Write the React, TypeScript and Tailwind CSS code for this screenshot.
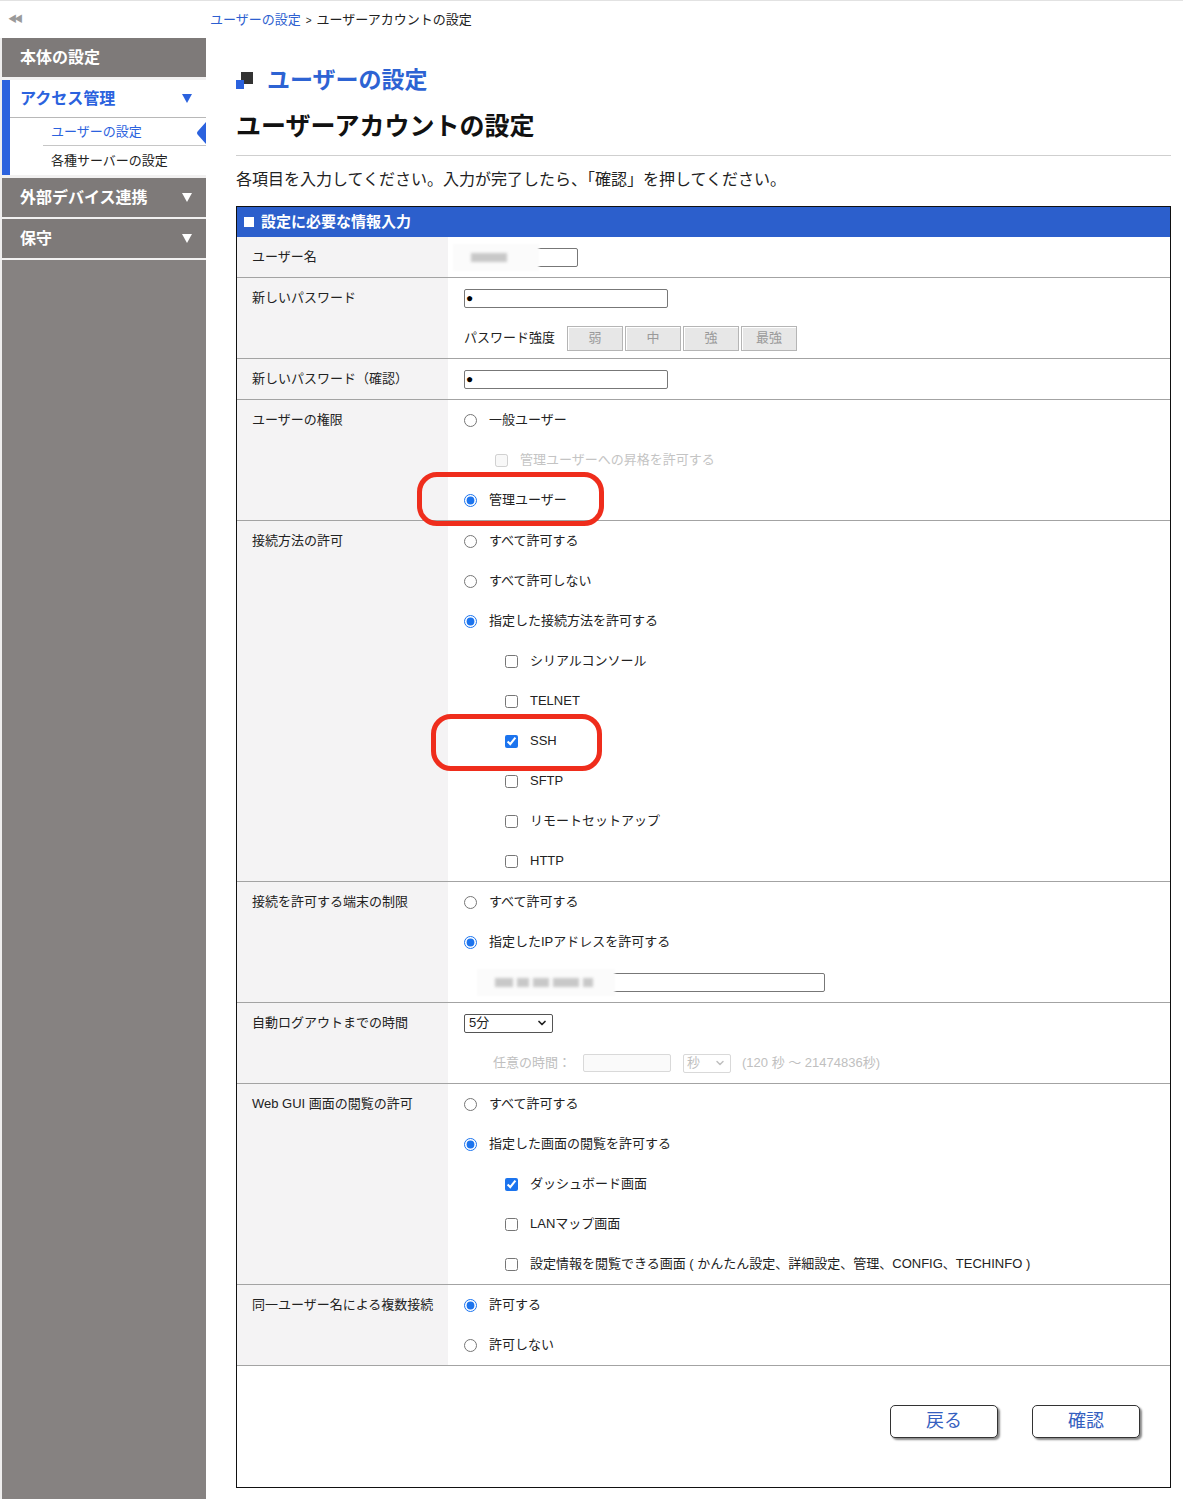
import { ChevronDown } from 'lucide-react';
import type { ReactNode } from 'react';

const blue = 'text-[#2d63d3]';

function Radio({ name, checked, label }: { name: string; checked?: boolean; label: string }) {
  return (
    <label className="flex items-center gap-3">
      <input type="radio" name={name} defaultChecked={checked} className="h-[13px] w-[13px] accent-[#1c74ee]" />
      <span>{label}</span>
    </label>
  );
}

function Check({ checked, label, disabled }: { checked?: boolean; label: string; disabled?: boolean }) {
  return (
    <label className={`flex items-center gap-3 ${disabled ? 'text-[#c4c4c4]' : ''}`}>
      <input
        type="checkbox"
        defaultChecked={checked}
        disabled={disabled}
        className="h-[13px] w-[13px] accent-[#1c74ee]"
      />
      <span>{label}</span>
    </label>
  );
}

// one 40px line inside the value column
function Line({ children, indent = 'pl-4', className = '' }: { children: ReactNode; indent?: string; className?: string }) {
  return <div className={`relative flex h-10 items-center ${indent} ${className}`}>{children}</div>;
}

function Row({ label, children }: { label: string; children: ReactNode }) {
  return (
    <div className="flex border-b border-[#a3a3a3]">
      <div className="w-[211px] shrink-0 bg-[#f4f3f4] pl-[15px]">
        <div className="flex h-10 items-center">{label}</div>
      </div>
      <div className="flex-1">{children}</div>
    </div>
  );
}

function Highlight({ className }: { className: string }) {
  return <div className={`pointer-events-none absolute rounded-[20px] border-[5px] border-[#ef2d1c] ${className}`} />;
}

function MaskedInput({ width, maskWidth, bars }: { width: string; maskWidth: string; bars: string[] }) {
  return (
    <div className={`relative h-[19px] rounded-[2px] border border-[#777] bg-white ${width}`}>
      <div className={`absolute -left-[12px] -top-[5px] h-[27px] bg-[#fbfbfb] blur-[1px] ${maskWidth}`} />
      <div className="absolute left-[6px] top-[4px] flex gap-[4px]">
        {bars.map((w, i) => (
          <div key={i} className={`h-[9px] bg-[#c8c8c8] blur-[1.5px] ${w}`} />
        ))}
      </div>
    </div>
  );
}

function Caret({ color }: { color: string }) {
  return (
    <svg width="10" height="9" viewBox="0 0 10 9">
      <path d="M0 0 H10 L5 9 Z" fill={color} />
    </svg>
  );
}

function SideHead({ label, arrow = true }: { label: string; arrow?: boolean }) {
  return (
    <div className="flex h-[39px] items-center justify-between bg-[#7e7a79] pl-[18px] pr-[14px] text-[16px] font-bold text-white">
      <span>{label}</span>
      {arrow && <Caret color="#fff" />}
    </div>
  );
}

export default function App() {
  return (
    <div className="flex min-h-[1499px] flex-col border-t border-[#e2e2e2] bg-white font-['Liberation_Sans','Noto_Sans_CJK_JP',sans-serif] text-[13px] text-[#222]">
      {/* top strip */}
      <div className="flex h-[37px] items-center">
        <div className="w-[206px] shrink-0 pl-[8px] text-[9px] tracking-[-3px] text-[#9a9a9a]">◀◀</div>
        <div className="pl-1 text-[13px]">
          <span className="text-[#2d5fd0]">ユーザーの設定</span>
          <span className="mx-[5px] text-[10px]">&gt;</span>
          <span>ユーザーアカウントの設定</span>
        </div>
      </div>

      <div className="flex flex-1">
        {/* side menu */}
        <aside className="w-[206px] shrink-0 border-l-2 border-[#efeeee] bg-[#868281]">
          <SideHead label="本体の設定" arrow={false} />
          <div className="h-[3px] bg-[#f2f1f1]" />
          <div className="border-l-[8px] border-[#2b62de] bg-white">
            <div className="flex h-[38px] items-center justify-between border-b border-[#b8b8b8] pl-[10px] pr-[14px] text-[16px] font-bold text-[#2b62de]">
              <span>アクセス管理</span>
              <Caret color="#2b62de" />
            </div>
            <div className="relative pl-[33px]">
              <div className="flex h-[28px] items-center border-b border-[#c6c6c6] pl-[8px] text-[13px] text-[#2b62de]">
                ユーザーの設定
              </div>
              <svg className="absolute right-0 top-[4px]" width="10" height="22" viewBox="0 0 10 22">
                <path d="M10 0 L2 9 Q0 11 2 13 L10 22 Z" fill="#2b62de" />
              </svg>
              <div className="flex h-[29px] items-center pl-[8px] text-[13px] text-[#222]">各種サーバーの設定</div>
            </div>
          </div>
          <div className="h-[3px] bg-[#f2f1f1]" />
          <SideHead label="外部デバイス連携" />
          <div className="h-[2px] bg-[#f2f1f1]" />
          <SideHead label="保守" />
          <div className="h-[2px] bg-[#f2f1f1]" />
        </aside>

        {/* main */}
        <main className="flex-1 pb-[12px] pl-[30px] pr-[12px]">
          <div className="mt-[25px] flex items-center gap-[14px]">
            <svg width="17" height="17" viewBox="0 0 17 17">
              <rect x="5" y="0" width="12" height="12" fill="#333" />
              <rect x="0" y="8" width="8" height="9" fill="#2b62de" />
            </svg>
            <h2 className={`text-[23px] font-bold ${blue}`}>ユーザーの設定</h2>
          </div>
          <h1 className="mt-[10px] text-[25px] font-bold text-[#111]">ユーザーアカウントの設定</h1>
          <div className="mt-[10px] h-px bg-[#cfcfcf]" />
          <p className="mt-[12px] text-[16px] text-[#222]">
            各項目を入力してください。入力が完了したら、「確認」を押してください。
          </p>

          <div className="mt-[14px] border border-[#111]">
            <div className="flex h-[30px] items-center gap-[7px] bg-[#2c5fcc] pl-[7px] text-[15px] font-bold text-white">
              <span className="h-[10px] w-[10px] bg-white" />
              <span>設定に必要な情報入力</span>
            </div>

            <Row label="ユーザー名">
              <Line>
                <MaskedInput width="w-[114px]" maskWidth="w-[86px]" bars={['w-[36px]']} />
              </Line>
            </Row>

            <Row label="新しいパスワード">
              <Line>
                <div className="flex h-[19px] w-[204px] items-center rounded-[2px] border border-[#777] pl-[1px] text-[12px] text-black">●</div>
              </Line>
              <Line>
                <span className="mr-[12px]">パスワード強度</span>
                <div className="flex gap-[2px]">
                  {['弱', '中', '強', '最強'].map((s) => (
                    <div
                      key={s}
                      className="flex h-[25px] w-[56px] items-center justify-center border border-[#b5b5b5] bg-[#e7e7e7] text-[#9a9a9a] shadow-[inset_1px_1px_0_#fff]"
                    >
                      {s}
                    </div>
                  ))}
                </div>
              </Line>
            </Row>

            <Row label="新しいパスワード（確認）">
              <Line>
                <div className="flex h-[19px] w-[204px] items-center rounded-[2px] border border-[#777] pl-[1px] text-[12px] text-black">●</div>
              </Line>
            </Row>

            <Row label="ユーザーの権限">
              <Line>
                <Radio name="role" label="一般ユーザー" />
              </Line>
              <Line indent="pl-[47px]">
                <Check disabled label="管理ユーザーへの昇格を許可する" />
              </Line>
              <Line>
                <Radio name="role" checked label="管理ユーザー" />
                <Highlight className="-left-[31px] -top-[8px] h-[54px] w-[187px]" />
              </Line>
            </Row>

            <Row label="接続方法の許可">
              <Line>
                <Radio name="conn" label="すべて許可する" />
              </Line>
              <Line>
                <Radio name="conn" label="すべて許可しない" />
              </Line>
              <Line>
                <Radio name="conn" checked label="指定した接続方法を許可する" />
              </Line>
              <Line indent="pl-[57px]">
                <Check label="シリアルコンソール" />
              </Line>
              <Line indent="pl-[57px]">
                <Check label="TELNET" />
              </Line>
              <Line indent="pl-[57px]">
                <Check checked label="SSH" />
                <Highlight className="-left-[17px] -top-[7px] h-[57px] w-[171px]" />
              </Line>
              <Line indent="pl-[57px]">
                <Check label="SFTP" />
              </Line>
              <Line indent="pl-[57px]">
                <Check label="リモートセットアップ" />
              </Line>
              <Line indent="pl-[57px]">
                <Check label="HTTP" />
              </Line>
            </Row>

            <Row label="接続を許可する端末の制限">
              <Line>
                <Radio name="host" label="すべて許可する" />
              </Line>
              <Line>
                <Radio name="host" checked label="指定したIPアドレスを許可する" />
              </Line>
              <Line indent="pl-[40px]">
                <MaskedInput width="w-[337px]" maskWidth="w-[138px]" bars={['w-[18px]', 'w-[12px]', 'w-[16px]', 'w-[26px]', 'w-[10px]']} />
              </Line>
            </Row>

            <Row label="自動ログアウトまでの時間">
              <Line>
                <div className="flex h-[19px] w-[89px] items-center justify-between rounded-[2px] border border-[#555] pl-[4px] pr-[4px] text-[13px]">
                  <span>5分</span>
                  <ChevronDown size={12} strokeWidth={3.5} />
                </div>
              </Line>
              <Line indent="pl-[45px]" className="text-[#c0c0c0]">
                <span>任意の時間：</span>
                <div className="ml-[12px] h-[18px] w-[88px] rounded-[2px] border border-[#d9d9d9] bg-[#fafafa]" />
                <div className="ml-[12px] flex h-[19px] w-[48px] items-center justify-between rounded-[2px] border border-[#d9d9d9] pl-[3px] pr-[4px]">
                  <span>秒</span>
                  <ChevronDown size={12} strokeWidth={3} />
                </div>
                <span className="ml-[11px]">(120 秒 〜 21474836秒)</span>
              </Line>
            </Row>

            <Row label="Web GUI 画面の閲覧の許可">
              <Line>
                <Radio name="gui" label="すべて許可する" />
              </Line>
              <Line>
                <Radio name="gui" checked label="指定した画面の閲覧を許可する" />
              </Line>
              <Line indent="pl-[57px]">
                <Check checked label="ダッシュボード画面" />
              </Line>
              <Line indent="pl-[57px]">
                <Check label="LANマップ画面" />
              </Line>
              <Line indent="pl-[57px]">
                <Check label="設定情報を閲覧できる画面 ( かんたん設定、詳細設定、管理、CONFIG、TECHINFO )" />
              </Line>
            </Row>

            <Row label="同一ユーザー名による複数接続">
              <Line>
                <Radio name="multi" checked label="許可する" />
              </Line>
              <Line>
                <Radio name="multi" label="許可しない" />
              </Line>
            </Row>

            <div className="flex h-[121px] items-start justify-end gap-[34px] pr-[30px] pt-[39px]">
              {['戻る', '確認'].map((b) => (
                <button
                  key={b}
                  className="h-[33px] w-[108px] rounded-[5px] border border-[#333] bg-white text-[18px] text-[#3560c0] shadow-[2px_2px_2px_#8a8a8a]"
                >
                  {b}
                </button>
              ))}
            </div>
          </div>
        </main>
      </div>
    </div>
  );
}
